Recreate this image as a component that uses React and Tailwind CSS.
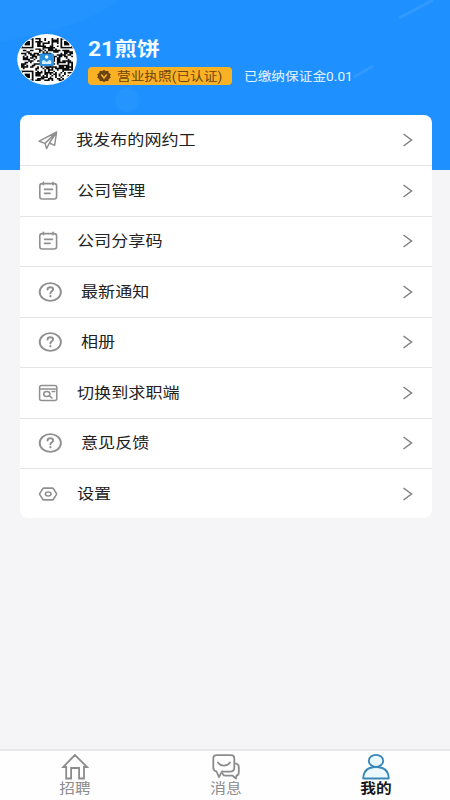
const FONT = "font-['Roboto','Noto_Sans_CJK_SC',sans-serif]";

function PlaneIcon() {
  return (
    <svg className="w-[21px] h-5" viewBox="0 0 21 20" fill="none" stroke="#909090" strokeWidth="1.5" strokeLinejoin="round" strokeLinecap="round">
      <path d="M18.6 2 1.2 11.2l5.8 2.2L18.6 2l-2 13.4-5.2-2.4M7 13.4l1.6 5.2 2.8-5.6L18.6 2" />
    </svg>
  );
}

function NoteIcon() {
  return (
    <svg className="w-[21px] h-5" viewBox="0 0 21 20" fill="none" stroke="#909090" strokeWidth="1.6" strokeLinecap="round">
      <rect x="1.8" y="2.6" width="16.8" height="15.4" rx="2.4" />
      <path d="M5.4 1.4v2.4M15 1.4v2.4M6.5 8.4h8M6.5 12.4h5.6" />
    </svg>
  );
}

function QuestionIcon() {
  return (
    <svg className="w-6 h-5" viewBox="0 0 24 20" fill="none" stroke="#909090" strokeWidth="1.9" strokeLinecap="round">
      <ellipse cx="12.3" cy="10" rx="10.6" ry="8.9" />
      <path d="M9.5 7.6c.1-1.6 1.2-2.3 2.8-2.3s2.8.8 2.8 2.2c0 1.9-2.7 1.8-2.7 3.9" />
      <path d="M12.4 14.2v.1" strokeWidth="2.2" />
    </svg>
  );
}

function SearchWindowIcon() {
  return (
    <svg className="w-[21px] h-5" viewBox="0 0 21 20" fill="none" stroke="#909090" strokeWidth="1.5" strokeLinecap="round">
      <rect x="1.6" y="2.4" width="17.2" height="15" rx="2" />
      <path d="M2 6h16.6M14.2 8.5h2.6M11.3 12.7l2.5 2.2" />
      <ellipse cx="8.8" cy="11.1" rx="3.1" ry="2.5" />
    </svg>
  );
}

function SettingsIcon() {
  return (
    <svg className="w-[21px] h-5" viewBox="0 0 21 20" fill="none" stroke="#909090" strokeWidth="1.6" strokeLinejoin="round">
      <path d="M6 4.1h8.2q.8 0 1.2.6l3 4.7q.4.6 0 1.2l-3 4.7q-.4.6-1.2.6H6q-.8 0-1.2-.6l-3-4.7q-.4-.6 0-1.2l3-4.7Q5.2 4.1 6 4.1z" />
      <ellipse cx="10.2" cy="10" rx="2.8" ry="2" />
    </svg>
  );
}

const QR_SIZE = 29;

function isFinder(x, y) {
  const near = (v) => v < 8;
  const far = (v) => v > QR_SIZE - 9;
  return (near(x) && near(y)) || (far(x) && near(y)) || (near(x) && far(y));
}

function qrPath() {
  let d = '';
  let seed = 7177;
  for (let y = 0; y < QR_SIZE; y++) {
    for (let x = 0; x < QR_SIZE; x++) {
      seed = (seed * 16807) % 2147483647;
      if (!isFinder(x, y) && seed / 2147483647 < 0.55) {
        d += `M${x} ${y}h1v1h-1z`;
      }
    }
  }
  return d;
}

function Avatar() {
  return (
    <svg className="w-[60px] h-[51px] shrink-0" viewBox="0 0 60 51">
      <defs>
        <clipPath id="avatar">
          <ellipse cx="30" cy="25.5" rx="29" ry="24.6" />
        </clipPath>
      </defs>
      <ellipse cx="30" cy="25.5" rx="29.8" ry="25.4" fill="#fff" />
      <g clipPath="url(#avatar)">
        <g transform="translate(4 4) scale(1.793 1.483)">
          <path d={qrPath()} fill="#0b0b0b" />
          {[[0, 0], [22, 0], [0, 22]].map(([x, y]) => (
            <g key={`${x}-${y}`}>
              <rect x={x + 0.5} y={y + 0.5} width="6" height="6" fill="none" stroke="#0b0b0b" />
              <rect x={x + 2} y={y + 2} width="3" height="3" fill="#0b0b0b" />
            </g>
          ))}
        </g>
        <rect x="22.5" y="19.5" width="14.5" height="12.5" rx="1.5" fill="#2b8fe0" />
        <circle cx="29.7" cy="23" r="1.7" fill="#fff" />
        <path d="M25 30v-2.2q0-1.8 2-1.8l2.7 2 2.6-2q2 0 2 1.8V30z" fill="#d8efff" />
      </g>
    </svg>
  );
}

function Header() {
  return (
    <header className="relative h-[170px] bg-[#1e90ff] overflow-hidden">
      <svg className="absolute inset-0 w-full h-full" viewBox="0 0 450 170" fill="none">
        <path d="M0 0h120Q85 27 0 42z" fill="#2b98ff" opacity=".4" />
        <path d="M399 18 433 0M354 77l19-11" stroke="#3a9eff" strokeWidth="3" opacity=".7" />
        <circle cx="127" cy="100" r="12" fill="#2b98ff" opacity=".5" />
      </svg>
      <div className="relative flex pt-[34px] pl-[17px]">
        <Avatar />
        <div className="ml-[11px] pt-[2px]">
          <h1 className="h-[27px] leading-[28px] text-[19.5px] font-bold text-[#f2fbff] whitespace-nowrap origin-left scale-x-[1.17]">
            21煎饼
          </h1>
          <div className="mt-[4px] h-[18px] flex items-center">
            <div className="flex items-center w-[144px] h-[18px] pl-[9px] rounded-[4px] bg-[#f9b225]">
              <svg className="w-[14px] h-3 shrink-0" viewBox="0 0 14 12">
                <path d="M7 0l2 .9 2.3.2.5 1.9L13.8 4.3 13 6l.8 1.7-2 1.3-.5 1.9-2.3.2L7 12l-2-.9-2.3-.2L2.2 9 .2 7.7 1 6 .2 4.3l2-1.3.5-1.900L5 .9z" fill="#6c4410" />
                <path d="M4.3 4.5 7 8l2.7-3.5" fill="none" stroke="#fbb323" strokeWidth="1.4" />
              </svg>
              <span className="ml-[6px] pt-[2px] text-[12px] leading-[18px] text-[#6c4410] whitespace-nowrap origin-left scale-x-[1.14]">
                营业执照(已认证)
              </span>
            </div>
            <span className="ml-[12px] pt-[2px] text-[12px] leading-[18px] text-[#e4f6ff] whitespace-nowrap origin-left scale-x-[1.14]">
              已缴纳保证金0.01
            </span>
          </div>
        </div>
      </div>
    </header>
  );
}

const menu = [
  { label: '我发布的网约工', Icon: PlaneIcon, gap: 'ml-[16.5px]' },
  { label: '公司管理', Icon: NoteIcon, gap: 'ml-[17.5px]' },
  { label: '公司分享码', Icon: NoteIcon, gap: 'ml-[17.5px]' },
  { label: '最新通知', Icon: QuestionIcon, gap: 'ml-[19px]' },
  { label: '相册', Icon: QuestionIcon, gap: 'ml-[19px]' },
  { label: '切换到求职端', Icon: SearchWindowIcon, gap: 'ml-[17.5px]' },
  { label: '意见反馈', Icon: QuestionIcon, gap: 'ml-[19px]' },
  { label: '设置', Icon: SettingsIcon, gap: 'ml-[17.5px]' },
];

function MenuItem({ label, Icon, gap }) {
  return (
    <li className="flex items-center h-[50.5px] first:h-[51px] last:h-[49px] pl-[18px] pr-[18px] border-b border-[#e4e4e6] last:border-b-0">
      <Icon />
      <span className={`${gap} text-[15px] leading-5 text-[#222] whitespace-nowrap origin-left scale-x-[1.14]`}>
        {label}
      </span>
      <svg className="ml-auto w-3 h-[14px]" viewBox="0 0 12 14" fill="none" stroke="#808080" strokeWidth="1.5">
        <path d="M1.5 1l8 6-8 6" />
      </svg>
    </li>
  );
}

function HomeIcon() {
  return (
    <svg className="w-7 h-[27px]" viewBox="0 0 28 27" fill="none" stroke="#8c8c8c" strokeWidth="1.8">
      <path d="M14 2 2.2 14H5.2v11.5h4.9V15h8v10.500h4.900V14h3z" />
    </svg>
  );
}

function ChatIcon() {
  return (
    <svg className="w-7 h-[27px]" viewBox="0 0 28 27" fill="none" stroke="#8c8c8c" strokeWidth="1.8" strokeLinejoin="round" strokeLinecap="round">
      <path d="M4.7 2.2h14.2q3.4 0 3.4 3.3v9q0 4.2-4.2 4.2h-7l-1.1-.3L7 24.2 4.5 18.5Q1.3 17.8 1.3 14.5v-9q0-3.3 3.4-3.3z" />
      <path d="M5.9 9.5q2.2 3.2 6 3.2t6-3.2" />
      <path d="M22.8 10.4q4 .5 4 3.8v5.2q0 2.7-2.2 3.1l-.6 3-3.4-2.8h-7.4q-1.8 0-2.5-2" />
    </svg>
  );
}

function UserIcon() {
  return (
    <svg className="w-7 h-[27px]" viewBox="0 0 28 27" fill="#ebf9ff" stroke="#3b87b8" strokeWidth="1.8" strokeLinejoin="round">
      <ellipse cx="14" cy="7.8" rx="7.2" ry="6" />
      <path d="M1.2 25.5q.4-11.5 12.8-11.5t12.8 11.5z" />
    </svg>
  );
}

const tabs = [
  { label: '招聘', Icon: HomeIcon, style: 'text-[#8c8c8c]' },
  { label: '消息', Icon: ChatIcon, style: 'text-[#8c8c8c]' },
  { label: '我的', Icon: UserIcon, style: 'text-[#181818] font-bold' },
];

function TabBar() {
  return (
    <nav className="grid grid-cols-[150px_151px_150px] h-[51px] bg-[#fefefe] border-t-2 border-[#e9e9eb]">
      {tabs.map(({ label, Icon, style }) => (
        <div key={label} className="flex flex-col items-center pt-[2px]">
          <Icon />
          <span className={`${style} text-[14px] leading-[17px] scale-x-[1.12]`}>{label}</span>
        </div>
      ))}
    </nav>
  );
}

export default function App() {
  return (
    <div className={`flex flex-col w-[450px] h-[800px] overflow-hidden bg-[#f5f5f7] ${FONT}`}>
      <Header />
      <ul className="relative -mt-[55px] ml-5 w-[412px] rounded-[8px] bg-white">
        {menu.map((item) => (
          <MenuItem key={item.label} {...item} />
        ))}
      </ul>
      <div className="flex-1" />
      <TabBar />
    </div>
  );
}
